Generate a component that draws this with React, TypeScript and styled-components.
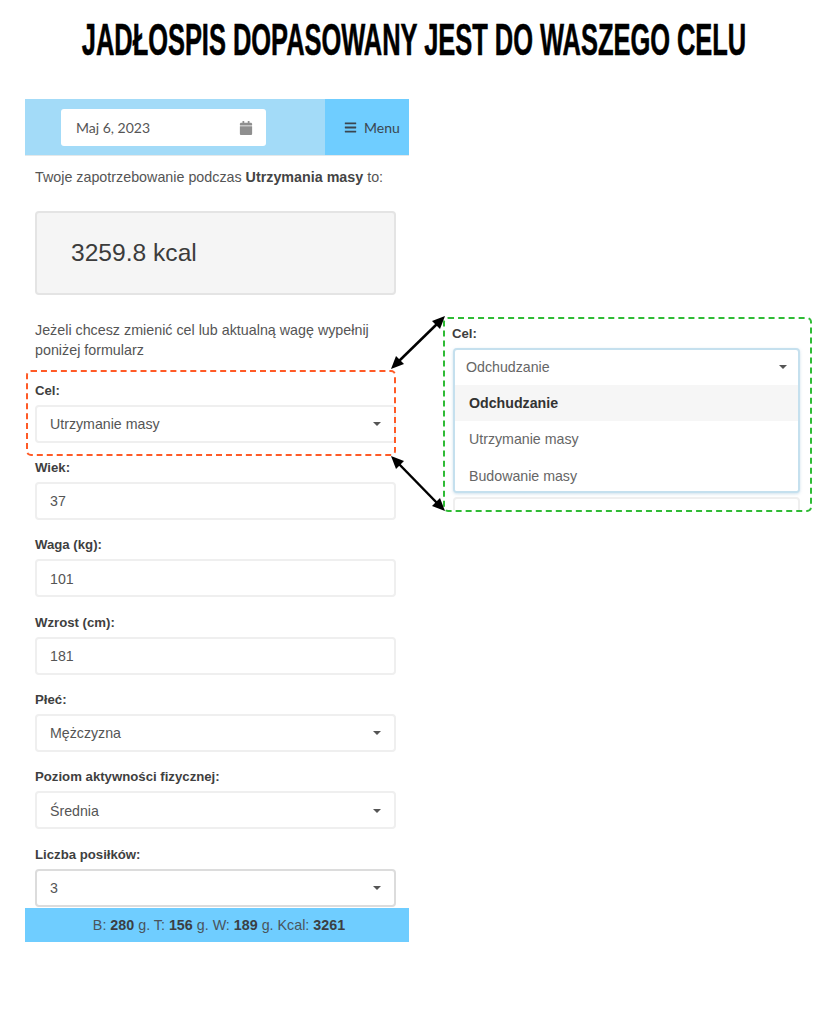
import React from "react";
import styled, { createGlobalStyle } from "styled-components";
import { FaBars, FaCalendar } from "react-icons/fa";

const Global = createGlobalStyle`
  html, body { margin: 0; padding: 0; background: #fff; }
  body { font-family: "Liberation Sans", Arial, sans-serif; color: #555; }
  * { box-sizing: border-box; }
`;

const Page = styled.div`
  position: relative;
  width: 819px;
  height: 1024px;
  overflow: hidden;
  background: #fff;
`;

const TitleBar = styled.div`
  height: 99px;
  display: flex;
  justify-content: center;
  padding: 14px 0 0 8px;
`;

const Title = styled.h1`
  margin: 0;
  height: 52px;
  font: 700 45px/52px "Liberation Sans", Arial, sans-serif;
  color: #000;
  white-space: nowrap;
  transform: scaleX(0.565);
  transform-origin: center top;
  -webkit-text-stroke: 0.6px #000;
`;

const Columns = styled.div`
  display: grid;
  grid-template-columns: 384px 369px;
  column-gap: 34px;
  padding-left: 25px;
  align-items: start;
`;

const Panel = styled.main`
  display: flex;
  flex-direction: column;
`;

const TopBar = styled.header`
  height: 57px;
  display: flex;
  background: #a3dbf8;
  border-bottom: 1px solid #e3e8ea;
`;

const DateCell = styled.div`
  flex: 1;
  padding: 10px 0 0 36px;
`;

const DateInput = styled.div`
  width: 205px;
  height: 37px;
  padding: 0 13px 0 15px;
  display: flex;
  align-items: center;
  justify-content: space-between;
  background: #fff;
  border-radius: 3px;
  font: 400 14px Lato, sans-serif;
  color: #555;
  svg { color: #8f8f8f; font-size: 14px; }
`;

const MenuButton = styled.div`
  width: 84px;
  display: flex;
  align-items: center;
  gap: 7px;
  padding-left: 19px;
  background: #6fcdff;
  font: 400 14px Lato, sans-serif;
  color: #3a4650;
  svg { font-size: 13px; }
`;

const Body = styled.div`
  padding: 0 13px 0 10px;
  display: flex;
  flex-direction: column;
`;

const Lead = styled.p`
  margin: 11px 0 0;
  font-size: 14.3px;
  line-height: 20px;
  color: #555;
  white-space: nowrap;
  b { color: #444; }
`;

const Well = styled.div`
  margin-top: 24px;
  height: 84px;
  padding-left: 34px;
  display: flex;
  align-items: center;
  background: #f5f5f5;
  border: 2px solid #e4e4e4;
  border-radius: 4px;
  font-size: 24.6px;
  color: #3c3c3c;
`;

const Hint = styled.p`
  margin: 25px 0 0;
  font-size: 14.3px;
  line-height: 20px;
  color: #555;
`;

const Fields = styled.div`
  margin-top: 22.67px;
  display: flex;
  flex-direction: column;
  gap: 17.33px;
`;

const Field = styled.div`
  position: relative;
`;

const Label = styled.label`
  display: block;
  height: 16px;
  margin-bottom: 6px;
  font-size: 13.2px;
  font-weight: 700;
  line-height: 16px;
  color: #3f3f3f;
  white-space: nowrap;
`;

const Control = styled.div<{ $strong?: boolean }>`
  height: 38px;
  padding: 1px 14px 0 13px;
  display: flex;
  align-items: center;
  justify-content: space-between;
  background: #fff;
  border: ${(p) => (p.$strong ? "2px solid #dcdcdc" : "2px solid #efefef")};
  border-radius: 4px;
  font-size: 14.2px;
  color: #555;
`;

const Caret = styled.span`
  width: 0;
  height: 0;
  margin-right: -1px;
  border-left: 4px solid transparent;
  border-right: 4px solid transparent;
  border-top: 4px solid #555;
`;

const RedOutline = styled.div`
  position: absolute;
  left: -9px;
  top: -13px;
  width: 370px;
  height: 86px;
  border: 2px dashed #ff5a26;
  border-radius: 5px;
  pointer-events: none;
`;

const Totals = styled.footer`
  height: 34px;
  margin-top: 1px;
  padding-left: 4px;
  display: flex;
  align-items: center;
  justify-content: center;
  background: #6fcdff;
  font-size: 14.3px;
  color: #4a545c;
  white-space: pre;
  b { color: #3b3f44; }
`;

const Callout = styled.aside`
  margin-top: 218px;
  height: 195px;
  padding: 7px 10px 0 7px;
  border: 2px dashed #2fbb35;
  border-radius: 5px;
  overflow: hidden;
`;

const CalloutLabel = styled(Label)`
  margin-bottom: 6px;
`;

const Dropdown = styled.div`
  height: 145px;
  margin-left: 1px;
  background: #fff;
  border: 2px solid #c5e0ee;
  border-radius: 4px;
  overflow: hidden;
  box-shadow: 0 1px 3px rgba(120, 170, 200, 0.35);
`;

const DropdownHead = styled.div`
  height: 34px;
  margin-bottom: 1px;
  padding: 0 12px 0 11px;
  display: flex;
  align-items: center;
  justify-content: space-between;
  font-size: 14.2px;
  color: #666;
`;

const Option = styled.div<{ $active?: boolean }>`
  height: 36.3px;
  padding-left: 14px;
  display: flex;
  align-items: center;
  font-size: 14.2px;
  font-weight: ${(p) => (p.$active ? 700 : 400)};
  color: ${(p) => (p.$active ? "#333" : "#666")};
  background: ${(p) => (p.$active ? "#f6f6f6" : "#fff")};
`;

const NextInput = styled.div`
  height: 30px;
  margin: 4px 0 0 1px;
  border: 2px solid #efefef;
  border-radius: 4px;
`;

const Arrows = styled.svg`
  position: absolute;
  left: 0;
  top: 0;
  pointer-events: none;
`;

const forms: { label: string; value: string; select?: boolean; strong?: boolean }[] = [
  { label: "Wiek:", value: "37" },
  { label: "Waga (kg):", value: "101" },
  { label: "Wzrost (cm):", value: "181" },
  { label: "Płeć:", value: "Mężczyzna", select: true },
  { label: "Poziom aktywności fizycznej:", value: "Średnia", select: true },
  { label: "Liczba posiłków:", value: "3", select: true, strong: true },
];

export default function App() {
  return (
    <Page>
      <Global />
      <TitleBar>
        <Title>JADŁOSPIS DOPASOWANY JEST DO WASZEGO CELU</Title>
      </TitleBar>
      <Columns>
        <Panel>
          <TopBar>
            <DateCell>
              <DateInput>
                Maj 6, 2023
                <FaCalendar />
              </DateInput>
            </DateCell>
            <MenuButton>
              <FaBars />
              Menu
            </MenuButton>
          </TopBar>
          <Body>
            <Lead>
              Twoje zapotrzebowanie podczas <b>Utrzymania masy</b> to:
            </Lead>
            <Well>3259.8 kcal</Well>
            <Hint>Jeżeli chcesz zmienić cel lub aktualną wagę wypełnij poniżej formularz</Hint>
            <Fields>
              <Field>
                <RedOutline />
                <Label>Cel:</Label>
                <Control>
                  Utrzymanie masy
                  <Caret />
                </Control>
              </Field>
              {forms.map((f) => (
                <Field key={f.label}>
                  <Label>{f.label}</Label>
                  <Control $strong={f.strong}>
                    {f.value}
                    {f.select && <Caret />}
                  </Control>
                </Field>
              ))}
            </Fields>
          </Body>
          <Totals>
            B: <b>280</b> g. T: <b>156</b> g. W: <b>189</b> g. Kcal: <b>3261</b>
          </Totals>
        </Panel>
        <Callout>
          <CalloutLabel>Cel:</CalloutLabel>
          <Dropdown>
            <DropdownHead>
              Odchudzanie
              <Caret />
            </DropdownHead>
            <Option $active>Odchudzanie</Option>
            <Option>Utrzymanie masy</Option>
            <Option>Budowanie masy</Option>
          </Dropdown>
          <NextInput />
        </Callout>
      </Columns>
      <Arrows width="819" height="1024" viewBox="0 0 819 1024">
        <g stroke="#000" strokeWidth="2.5" fill="none">
          <path d="M398 362 L438 323" />
          <path d="M398 463 L438 504" />
        </g>
        <g fill="#000">
          <path d="M445 316 L440 329 L432 321 Z" />
          <path d="M391 369 L396 356 L404 364 Z" />
          <path d="M391 456 L404 461 L396 469 Z" />
          <path d="M445 511 L432 506 L440 498 Z" />
        </g>
      </Arrows>
    </Page>
  );
}
